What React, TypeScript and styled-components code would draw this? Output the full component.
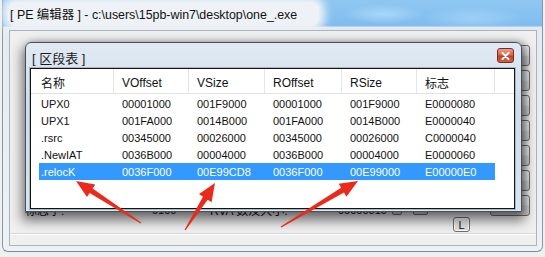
import * as React from 'react'
import styled, { createGlobalStyle } from 'styled-components'

const GlobalStyle = createGlobalStyle`
  html, body {
    margin: 0;
    padding: 0;
    overflow: hidden;
    background: #dde4ec;
  }
`

const uiFont = `"Liberation Sans", "Noto Sans CJK SC", sans-serif`

const Screen = styled.div`
  position: relative;
  width: 545px;
  height: 257px;
  overflow: hidden;
  background: #eef0f2;
  font-family: ${uiFont};
`

const Window = styled.div`
  display: flex;
  flex-direction: column;
  width: 541px;
  height: 252px;
  margin-left: 2px;
  border-left: 1px solid #8d97a3;
  border-right: 1px solid #8d97a3;
  border-bottom: 1px solid #7f8994;
  border-radius: 0 0 6px 6px;
  background: linear-gradient(180deg, #e4eaf0 0%, #eef2f6 100%);
  box-sizing: border-box;
`

const TitleBar = styled.div`
  display: flex;
  align-items: center;
  height: 30px;
  padding: 0 0 3px 5px;
  box-sizing: border-box;
  background:
    linear-gradient(180deg, transparent 0 26px, #e3e9ef 27px),
    radial-gradient(ellipse 40px 10px at 380px 14px, rgba(180, 220, 250, 0.8), transparent),
    radial-gradient(ellipse 50px 12px at 470px 18px, rgba(170, 215, 250, 0.7), transparent),
    linear-gradient(180deg, #8fc7f1 0%, #7dbbee 100%);
`

const TitleText = styled.span`
  font-size: 12.4px;
  color: #111;
  padding: 3px 22px 3px 2px;
  background: #eef2f6;
  border-radius: 8px;
  box-shadow: 0 0 8px 6px #eef2f6;
  white-space: nowrap;
`

const Body = styled.div`
  display: flex;
  flex: 1;
  padding: 0 5px 5px 6px;
`

const Client = styled.div`
  position: relative;
  display: flex;
  flex-direction: column;
  flex: 1;
  background: #f0f0f0;
  border: 1px solid #a9b4bf;
`

const Main = styled.div`
  display: flex;
  flex: 1;
  padding: 0 6px 0 15px;
`

const LeftPane = styled.div`
  display: flex;
  flex: 1;
  flex-direction: column;
  justify-content: flex-end;
`

const FieldRow = styled.div`
  display: flex;
  align-items: center;
  height: 13px;
  font-size: 12px;
  color: #111;
`

const FieldLabel = styled.span<{ $w: number; $small?: boolean }>`
  width: ${(p) => p.$w}px;
  font-size: ${(p) => (p.$small ? 11 : 12)}px;
  white-space: nowrap;
`

const SmallButton = styled.div<{ $w: number; $ml: number }>`
  width: ${(p) => p.$w}px;
  height: 10px;
  margin-left: ${(p) => p.$ml}px;
  border: 1px solid #707070;
  border-radius: 2px;
  background: linear-gradient(180deg, #f2f2f2, #d6d6d6);
  box-sizing: border-box;
`

const LRow = styled.div`
  display: flex;
  padding: 1px 0 1px 428px;
`

const LButton = styled.div`
  display: flex;
  align-items: center;
  justify-content: center;
  width: 17px;
  height: 15px;
  border: 1px solid #707070;
  border-radius: 3px;
  background: linear-gradient(180deg, #f4f4f4, #dcdcdc);
  box-shadow: inset 0 0 0 1px #fff;
  box-sizing: border-box;
  font-size: 11px;
  color: #111;
`

const ButtonColumn = styled.div`
  display: flex;
  flex-direction: column;
  gap: 4px;
  width: 40px;
  padding-top: 14px;
`

const SideButton = styled.div`
  height: 21px;
  border: 1px solid #707070;
  border-radius: 3px;
  background: linear-gradient(180deg, #f2f2f2 0%, #ebebeb 45%, #d8d8d8 55%, #cfcfcf 100%);
  box-sizing: border-box;
`

const Divider = styled.div`
  height: 1px;
  background: #d6d9dd;
  border-bottom: 1px solid #fff;
`

const Footer = styled.div`
  height: 10px;
`

const Dialog = styled.div`
  position: absolute;
  left: 15px;
  top: 11px;
  width: 497px;
  height: 170px;
  display: flex;
  flex-direction: column;
  border: 1px solid #46505c;
  border-radius: 6px 6px 0 0;
  background: linear-gradient(180deg, #e1eaf3 0%, #cfdcea 40%, #d9e4ef 100%);
  box-shadow: 0 6px 12px 3px rgba(0, 0, 0, 0.5), 3px 0 6px rgba(0, 0, 0, 0.25);
  box-sizing: border-box;
`

const DialogTitleRow = styled.div`
  display: flex;
  align-items: flex-start;
  justify-content: space-between;
  height: 25px;
  padding: 0 7px 0 6px;
`

const DialogTitle = styled.span`
  margin-top: 5px;
  font-size: 13px;
  color: #1a1a1a;
`

const CloseButton = styled.div`
  display: flex;
  align-items: center;
  justify-content: center;
  width: 17px;
  height: 15px;
  margin-top: 5px;
  border: 1px solid #7a2a22;
  border-radius: 3px;
  background: linear-gradient(180deg, #e9a08f 0%, #d9664f 45%, #c2401f 55%, #d0644a 100%);
  box-sizing: border-box;
`

const DialogBody = styled.div`
  display: flex;
  flex: 1;
  padding: 0 6px 2px 4px;
`

const ListView = styled.div`
  flex: 1;
  background: #fff;
  border: 1px solid #141414;
  box-shadow: 0 0 0 1px #aab6c2;
  overflow: hidden;
`

const HeaderRow = styled.div`
  display: flex;
  height: 25px;
  padding-left: 2px;
  border-bottom: 1px solid #e2e2e2;
  box-sizing: border-box;
`

const HeaderCell = styled.div<{ $w: number }>`
  width: ${(p) => p.$w}px;
  padding: 3px 0 0 8px;
  display: flex;
  align-items: center;
  border-right: 1px solid #e3e6ea;
  box-sizing: border-box;
  font-size: 12px;
  color: #111;
`

const Rows = styled.div`
  padding-top: 1px;
`

const Row = styled.div<{ $selected?: boolean }>`
  display: flex;
  width: 456px;
  height: 17px;
  margin-left: 8px;
  align-items: center;
  background: ${(p) => (p.$selected ? '#3399ff' : 'transparent')};
  color: ${(p) => (p.$selected ? '#fff' : '#111')};
`

const Cell = styled.div<{ $w: number; $first?: boolean }>`
  width: ${(p) => p.$w}px;
  padding-left: ${(p) => (p.$first ? 2 : 8)}px;
  box-sizing: border-box;
  font-size: 11px;
  white-space: nowrap;
`

const ArrowLayer = styled.svg`
  position: absolute;
  left: 0;
  top: 0;
  pointer-events: none;
`

const headers = [
  { title: '名称', width: 81 },
  { title: 'VOffset', width: 75 },
  { title: 'VSize', width: 76 },
  { title: 'ROffset', width: 77 },
  { title: 'RSize', width: 75 },
  { title: '标志', width: 78 },
]

const cellWidths = [75, 75, 76, 77, 75, 78]

const sections = [
  ['UPX0', '00001000', '001F9000', '00001000', '001F9000', 'E0000080'],
  ['UPX1', '001FA000', '0014B000', '001FA000', '0014B000', 'E0000040'],
  ['.rsrc', '00345000', '00026000', '00345000', '00026000', 'C0000040'],
  ['.NewIAT', '0036B000', '00004000', '0036B000', '00004000', 'E0000060'],
  ['.relocK', '0036F000', '00E99CD8', '0036F000', '00E99000', 'E00000E0'],
]

// tapered hand-drawn arrow from tail to tip
const arrowPoints = (x1: number, y1: number, x2: number, y2: number) => {
  const dx = x2 - x1
  const dy = y2 - y1
  const len = Math.hypot(dx, dy)
  const ux = dx / len
  const uy = dy / len
  const nx = -uy
  const ny = ux
  const headLen = 18
  const bx = x2 - ux * headLen
  const by = y2 - uy * headLen
  const p = (x: number, y: number, k: number) =>
    `${(x + nx * k).toFixed(1)},${(y + ny * k).toFixed(1)}`
  return [
    p(x1, y1, 0.6),
    p(bx, by, 2.8),
    p(bx, by, 7.5),
    `${x2},${y2}`,
    p(bx, by, -7.5),
    p(bx, by, -2.8),
    p(x1, y1, -0.6),
  ].join(' ')
}

const arrows = [
  [141, 223, 76, 181],
  [185, 230, 215, 183],
  [281, 227, 358, 181],
]

const App: React.FC = () => (
  <Screen>
    <GlobalStyle />
    <Window>
      <TitleBar>
        <TitleText>[ PE 编辑器 ] - c:\users\15pb-win7\desktop\one_.exe</TitleText>
      </TitleBar>
      <Body>
        <Client>
          <Main>
            <LeftPane>
              <FieldRow>
                <FieldLabel $w={127}>标志字:</FieldLabel>
                <FieldLabel $w={58} $small>0100</FieldLabel>
                <FieldLabel $w={128}>RVA 数及大小:</FieldLabel>
                <FieldLabel $w={54} $small>00000010</FieldLabel>
                <SmallButton $w={10} $ml={0} />
                <SmallButton $w={15} $ml={11} />
              </FieldRow>
              <LRow>
                <LButton>L</LButton>
              </LRow>
            </LeftPane>
            <ButtonColumn>
              {Array.from({ length: 7 }).map((_, i) => (
                <SideButton key={i} />
              ))}
            </ButtonColumn>
          </Main>
          <Divider />
          <Footer />

          <Dialog>
            <DialogTitleRow>
              <DialogTitle>[ 区段表 ]</DialogTitle>
              <CloseButton>
                <svg width="9" height="8" viewBox="0 0 9 8">
                  <path
                    d="M1.5 1 L7.5 7 M7.5 1 L1.5 7"
                    stroke="#fff"
                    strokeWidth="2"
                    strokeLinecap="round"
                  />
                </svg>
              </CloseButton>
            </DialogTitleRow>
            <DialogBody>
              <ListView>
                <HeaderRow>
                  {headers.map((h) => (
                    <HeaderCell key={h.title} $w={h.width}>
                      {h.title}
                    </HeaderCell>
                  ))}
                </HeaderRow>
                <Rows>
                  {sections.map((row, i) => (
                    <Row key={row[0]} $selected={i === sections.length - 1}>
                      {row.map((v, j) => (
                        <Cell key={j} $w={cellWidths[j]} $first={j === 0}>
                          {v}
                        </Cell>
                      ))}
                    </Row>
                  ))}
                </Rows>
              </ListView>
            </DialogBody>
          </Dialog>
        </Client>
      </Body>
    </Window>

    <ArrowLayer width="545" height="257" viewBox="0 0 545 257">
      {arrows.map(([x1, y1, x2, y2], i) => (
        <polygon key={i} points={arrowPoints(x1, y1, x2, y2)} fill="#ea2a1b" />
      ))}
    </ArrowLayer>
  </Screen>
)

export default App
